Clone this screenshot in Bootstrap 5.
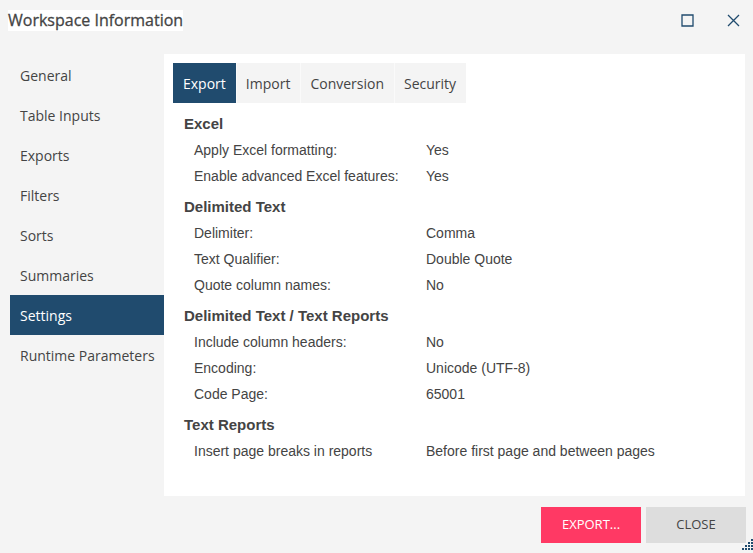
<!DOCTYPE html>
<html lang="en">
<head>
<meta charset="utf-8">
<meta name="viewport" content="width=device-width, initial-scale=1">
<title>Workspace Information</title>
<link rel="stylesheet" href="https://cdn.jsdelivr.net/npm/bootstrap@5.3.0/dist/css/bootstrap.min.css">
<style>
  :root { --navy: #204b6e; --shade: #f4f4f4; --ink: #444; }
  body { background: var(--shade); color: var(--ink); font: 14px/20px "Open Sans", "Noto Sans", sans-serif; }
  .btn, .nav-link { --bs-btn-border-radius: 0; border-radius: 0; }
  .dialog-head { height: 54px; padding: 10px 5px 0 8px; }
  .dialog-title { font-size: 16px; line-height: 21px; font-weight: 400; -webkit-text-stroke: .3px currentColor; }
  .tool { width: 30px; height: 21px; color: var(--navy); }
  .dialog-body { padding: 0 8px 0 10px; }
  .side { width: 154px; padding: 1px 1px 0 0; }
  .side .nav-link, .tabs .nav-link { padding: 11px 10px 9px; line-height: 20px; color: var(--ink); white-space: nowrap; }
  .side .nav-link.active, .tabs .nav-link.active { background: var(--navy); color: #fff; }
  .panel { padding: 9px; }
  .tabs { margin-bottom: 8px; }
  .tabs .nav-link { background: var(--shade); }
  .tabs .nav-link + .nav-link { box-shadow: inset 1px 0 #fafafa; }
  .details { padding-left: 11px; font: 14px/26px "Liberation Sans", Arial, sans-serif; }
  .details h2 { font-size: 15px; line-height: 26px; font-weight: 700; }
  .details section + section { margin-top: 5px; }
  .details dl { display: grid; grid-template-columns: 232px 1fr; padding-left: 10px; }
  .details dt { font-weight: 400; }
  .dialog-foot { gap: 5px; padding: 11px 7px 10px; }
  .dialog-foot .btn { width: 100px; height: 36px; padding: 0; border: 0; font-size: 13px; }
  .btn-export, .btn-export:hover { background: #ff3964; color: #fff; }
  .btn-dismiss, .btn-dismiss:hover { background: #ddd; color: var(--ink); }
  .grip { right: 0; bottom: 3px; }
</style>
<script src="https://cdn.jsdelivr.net/npm/bootstrap@5.3.0/dist/js/bootstrap.bundle.min.js"></script>
</head>
<body>
<div class="d-flex flex-column min-vh-100 position-relative">
  <header class="dialog-head d-flex align-items-start">
    <h1 class="dialog-title bg-white mb-0 me-auto">Workspace Information</h1>
    <div class="d-flex gap-3">
      <button type="button" class="tool btn p-0 border-0 d-flex align-items-center justify-content-center" aria-label="Maximize">
        <svg width="14" height="13" viewBox="0 0 14 13" fill="none" stroke="currentColor" stroke-width="1.3"><path d="M2 1h11v11H2z"/></svg>
      </button>
      <button type="button" class="tool btn p-0 border-0 d-flex align-items-center justify-content-center" aria-label="Close window">
        <svg width="13" height="13" viewBox="0 0 13 13" fill="none" stroke="currentColor" stroke-width="1.3"><path d="M1 1l11 11M12 1L1 12"/></svg>
      </button>
    </div>
  </header>
  <div class="dialog-body d-flex flex-grow-1">
    <nav class="side nav flex-column flex-shrink-0" aria-label="Workspace sections">
      <a class="nav-link" href="#general">General</a>
      <a class="nav-link" href="#inputs">Table Inputs</a>
      <a class="nav-link" href="#exports">Exports</a>
      <a class="nav-link" href="#filters">Filters</a>
      <a class="nav-link" href="#sorts">Sorts</a>
      <a class="nav-link" href="#summaries">Summaries</a>
      <a class="nav-link active" href="#settings" aria-current="page">Settings</a>
      <a class="nav-link" href="#runtime">Runtime Parameters</a>
    </nav>
    <main class="panel bg-white flex-grow-1" id="settings">
      <div class="tabs nav" role="tablist">
        <button type="button" class="nav-link border-0 active" role="tab" aria-selected="true">Export</button>
        <button type="button" class="nav-link border-0" role="tab" aria-selected="false">Import</button>
        <button type="button" class="nav-link border-0" role="tab" aria-selected="false">Conversion</button>
        <button type="button" class="nav-link border-0" role="tab" aria-selected="false">Security</button>
      </div>
      <div class="details">
        <section>
          <h2 class="mb-0">Excel</h2>
          <dl class="mb-0">
            <dt>Apply Excel formatting:</dt><dd class="mb-0">Yes</dd>
            <dt>Enable advanced Excel features:</dt><dd class="mb-0">Yes</dd>
          </dl>
        </section>
        <section>
          <h2 class="mb-0">Delimited Text</h2>
          <dl class="mb-0">
            <dt>Delimiter:</dt><dd class="mb-0">Comma</dd>
            <dt>Text Qualifier:</dt><dd class="mb-0">Double Quote</dd>
            <dt>Quote column names:</dt><dd class="mb-0">No</dd>
          </dl>
        </section>
        <section>
          <h2 class="mb-0">Delimited Text / Text Reports</h2>
          <dl class="mb-0">
            <dt>Include column headers:</dt><dd class="mb-0">No</dd>
            <dt>Encoding:</dt><dd class="mb-0">Unicode (UTF-8)</dd>
            <dt>Code Page:</dt><dd class="mb-0">65001</dd>
          </dl>
        </section>
        <section>
          <h2 class="mb-0">Text Reports</h2>
          <dl class="mb-0">
            <dt>Insert page breaks in reports</dt><dd class="mb-0">Before first page and between pages</dd>
          </dl>
        </section>
      </div>
    </main>
  </div>
  <footer class="dialog-foot d-flex justify-content-end">
    <button type="button" class="btn btn-export">EXPORT...</button>
    <button type="button" class="btn btn-dismiss">CLOSE</button>
  </footer>
  <svg class="grip position-absolute" width="11" height="11" viewBox="0 0 11 11" fill="#204b6e" aria-hidden="true"><path d="M9 0h2v2H9zM6 3h2v2H6zM9 3h2v2H9zM3 6h2v2H3zM6 6h2v2H6zM9 6h2v2H9zM0 9h2v2H0zM3 9h2v2H3zM6 9h2v2H6zM9 9h2v2H9z"/></svg>
</div>
</body>
</html>
